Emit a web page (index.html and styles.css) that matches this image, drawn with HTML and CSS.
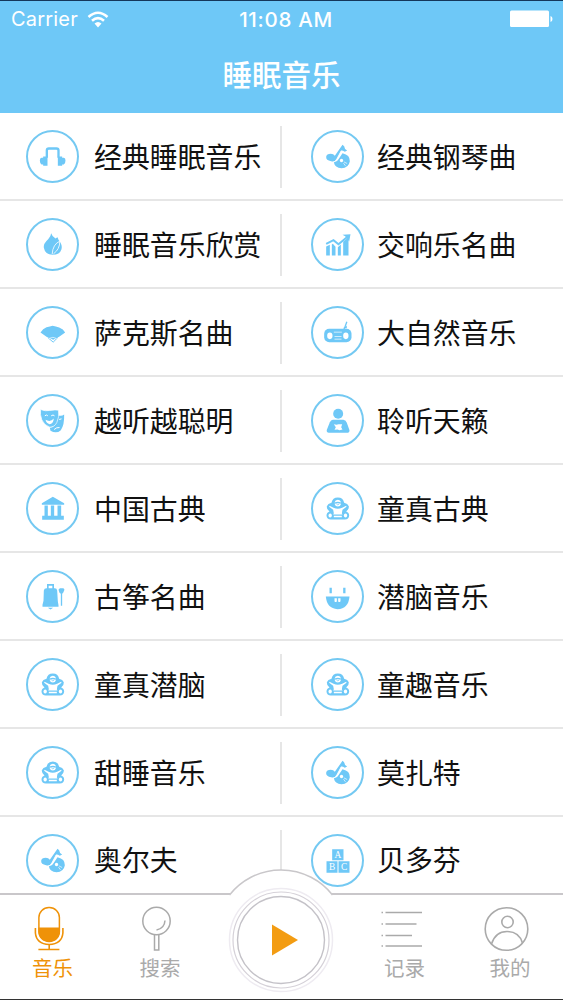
FILE: index.html
```
<!DOCTYPE html>
<html lang="zh-CN">
<head>
  <meta charset="UTF-8" />
  <meta name="viewport" content="width=device-width, initial-scale=1.0"/>
  <title>睡眠音乐</title>
  <link rel="stylesheet" href="styles.css">
</head>
<body>
  <!-- icon set, origin is the middle of the round badge -->
  <svg class="sprite" aria-hidden="true">
    <symbol id="headphones" viewBox="-73.5 -73.5 147 147">
      <path d="M-17 4V-18Q-17-24-11-24H12Q18-24 18-18V4" fill="none" stroke="currentColor" stroke-width="7"/>
      <path d="M-28 0H-15V28H-28V24H-33Q-38 20-38 12Q-38 5-33 4H-28ZM29 0H16V28H29V24H34Q39 20 39 12Q39 5 34 4H29Z"/>
    </symbol>
    <symbol id="drop" viewBox="-73.5 -73.5 147 147">
      <path d="M-4-34Q-1-24 9-18Q15-22 15-22Q17-15 22-9Q30 3 27 14Q22 31 0 31Q-22 31-26 10Q-28-3-13-16Q-5-24-4-34Z"/>
      <path d="M22-10Q1-1-1 29M22-10Q22 14 3 28" fill="none" stroke="#fff" stroke-width="2.500"/>
    </symbol>
    <symbol id="disc" viewBox="-73.5 -73.5 147 147">
      <path d="M15-35L20-31Q20-24 29-18L22-14Q15-19 11-18L-2 7Q-8 18-19 14Q-35 12-34 1Q-33-8-20-8Q-12-8-8-2Z"/>
      <path d="M15-10Q38-5 37 14Q34 34 12 35Q-8 34-11 17Q-2 17 4 7Z"/>
      <circle cx="12" cy="12" r="5" fill="#fff"/>
      <path d="M19 16L29 21M18 20L24 28M11-17L-2 7Q-6 16-14 18" fill="none" stroke="#fff" stroke-width="2"/>
    </symbol>
    <symbol id="chart" viewBox="-73.5 -73.5 147 147">
      <path d="M-34 33V6L-23 1V33ZM-17 33V0L-14-2L-6 7V33ZM1 33V8L10 0V33ZM17 33V-8L33-22V33Z"/>
      <path d="M-34-2L-12-13L3-1L30-23" fill="none" stroke="currentColor" stroke-width="6"/>
      <path d="M15-29L39-31L35-9L29-17L23-25Z"/>
    </symbol>
    <symbol id="fan" viewBox="-73.5 -73.5 147 147">
      <path d="M-36 0L-28-10L-18-16L-8-18L0-20L10-18L20-15L31-9L38 0L20 13L2 22L-18 13Z"/>
      <path d="M-14 15L2 29L16 15" fill="none" stroke="currentColor" stroke-width="3"/>
      <path d="M-11 18Q2 11 12 18" fill="none" stroke="#fff" stroke-width="2"/>
    </symbol>
    <symbol id="masks" viewBox="-73.5 -73.5 147 147">
      <path d="M16-16Q27-12 35-18Q36 13 25 29Q12 41-6 31L-8 22Q15 17 16-16Z"/>
      <path d="M5 27Q12 20 21 21" fill="none" stroke="#fff" stroke-width="3"/>
      <path d="M20-3L27-5" stroke="#fff" stroke-width="3"/>
      <path d="M-36-33Q-21-27-8-30Q8-33 18-31Q21-10 13 6Q6 20-8 20Q-25 15-32-2Q-38-18-36-33Z" stroke="#fff" stroke-width="2"/>
      <path d="M-21-2Q-6 6 4-6Q2 11-9 11Q-18 9-21-2Z" fill="#fff"/>
      <path d="M-23-14Q-18-19-14-14M-4-14Q2-19 6-14" fill="none" stroke="#fff" stroke-width="3"/>
    </symbol>
    <symbol id="radio" viewBox="-73.5 -73.5 147 147">
      <rect x="-40" y="-11" width="82" height="40" rx="15"/>
      <path d="M20-10L28-32" stroke="currentColor" stroke-width="4"/>
      <path d="M16-13L28-20V-13Z"/>
      <ellipse cx="-23" cy="10" rx="8" ry="10" fill="#fff"/>
      <ellipse cx="25" cy="10" rx="8" ry="10" fill="#fff"/>
      <path d="M-11-1H13M-9 12H12M-9 20H12" stroke="#fff" stroke-width="2"/>
    </symbol>
    <symbol id="reader" viewBox="-73.5 -73.5 147 147">
      <circle cx="2" cy="-20" r="15"/>
      <path d="M-14-2H18Q25 0 28 7L36 29Q36 37 28 37H-26Q-34 36-32 28L-23 5Q-20-1-14-2Z"/>
      <path d="M-11 11L-3 13L3 11L14 11L11 20L15 27L6 29L0 27L-9 28L-5 20Z" fill="#fff"/>
    </symbol>
    <symbol id="temple" viewBox="-73.5 -73.5 147 147">
      <path d="M1-35L35-16V-11H-32V-16ZM-24-9H-14V23H-24ZM-5-9H5V23H-5ZM15-9H26V23H15ZM-31 22H34V34H-31Z"/>
    </symbol>
    <symbol id="bear" viewBox="-73.5 -73.5 147 147">
      <path d="M1-33Q17-33 20-17Q31-14 34-7Q35 2 26 9Q35 12 35 22Q34 33 22 33H-20Q-32 33-33 22Q-33 12-24 9Q-33 2-32-7Q-29-14-18-17Q-15-33 1-33Z"/>
      <g fill="#fff">
        <path d="M-9-18Q-7-26 1-26Q9-26 11-18Q1-22-9-18Z"/>
        <path d="M-9-14Q1-18 11-14Q9-6 1-6Q-7-6-9-14Z"/>
        <path d="M-24-8L-12-2Q1 4 14-2L26-8L27-5L15 4L13 14L15 18H-13L-11 14L-13 4L-25-5Z"/>
        <path d="M-11 22H13V26H-11Z"/>
        <ellipse cx="-22" cy="21" rx="5" ry="6"/>
        <ellipse cx="24" cy="21" rx="5" ry="6"/>
      </g>
      <path d="M-3-13Q1-9 5-13" fill="none" stroke="currentColor" stroke-width="2"/>
    </symbol>
    <symbol id="zither" viewBox="-73.5 -73.5 147 147">
      <path d="M-14-20V-35H2V-20" fill="none" stroke="currentColor" stroke-width="5"/>
      <path d="M-18-25H7Q13-25 14-18L16 14L18 26V31H-30V25L-27 13L-26-18Q-25-25-18-25ZM-14 34H2L-6 39Z"/>
      <path d="M18-20L22-25H33L36-20L32-11L29-8V28H25V-8L21-11Z"/>
    </symbol>
    <symbol id="smile" viewBox="-73.5 -73.5 147 147">
      <path d="M-35 0H36Q33 37 0 38Q-32 36-35 0Z"/>
      <path d="M-24-26H-17V-10H-24ZM17-26H24V-10H17Z"/>
      <path d="M-9 5H-2V15Q-7 19-9 14ZM2 5H9V14Q6 19 2 15Z" fill="#fff"/>
    </symbol>
    <symbol id="blocks" viewBox="-73.5 -73.5 147 147">
      <path d="M-16-34H18V-1H-16ZM-33 2H0V37H-33ZM3 2H36V37H3Z"/>
      <g class="block-letters">
        <text x="1" y="-8">A</text>
        <text x="-16" y="29">B</text>
        <text x="20" y="29">C</text>
      </g>
    </symbol>
  </svg>

  <div class="app">
    <header class="header">
      <div class="status-bar">
        <div class="carrier">
          <span>Carrier</span>
          <svg class="wifi" viewBox="0 0 22 17">
            <path d="M1.500 6Q11-2.500 20.500 6M5 9.800Q11 4.500 17 9.800" fill="none" stroke="#fff" stroke-width="2.600"/>
            <path d="M7.500 12.500Q11 9.500 14.500 12.500L11 16.500Z" fill="#fff"/>
          </svg>
        </div>
        <div class="time">11:08 AM</div>
        <svg class="battery" viewBox="0 0 43 18">
          <rect x="0" y="0.500" width="39" height="16.500" rx="1.500" fill="#fff"/>
          <path d="M40.500 6Q42.500 6.500 42.500 9Q42.500 11.500 40.500 12Z" fill="#fff"/>
        </svg>
      </div>
      <h1 class="title">睡眠音乐</h1>
    </header>

    <main class="list">
      <div class="cell"><svg class="badge"><use href="#headphones"/></svg><span>经典睡眠音乐</span></div>
      <div class="cell"><svg class="badge"><use href="#disc"/></svg><span>经典钢琴曲</span></div>
      <div class="cell"><svg class="badge"><use href="#drop"/></svg><span>睡眠音乐欣赏</span></div>
      <div class="cell"><svg class="badge"><use href="#chart"/></svg><span>交响乐名曲</span></div>
      <div class="cell"><svg class="badge"><use href="#fan"/></svg><span>萨克斯名曲</span></div>
      <div class="cell"><svg class="badge"><use href="#radio"/></svg><span>大自然音乐</span></div>
      <div class="cell"><svg class="badge"><use href="#masks"/></svg><span>越听越聪明</span></div>
      <div class="cell"><svg class="badge"><use href="#reader"/></svg><span>聆听天籁</span></div>
      <div class="cell"><svg class="badge"><use href="#temple"/></svg><span>中国古典</span></div>
      <div class="cell"><svg class="badge"><use href="#bear"/></svg><span>童真古典</span></div>
      <div class="cell"><svg class="badge"><use href="#zither"/></svg><span>古筝名曲</span></div>
      <div class="cell"><svg class="badge"><use href="#smile"/></svg><span>潜脑音乐</span></div>
      <div class="cell"><svg class="badge"><use href="#bear"/></svg><span>童真潜脑</span></div>
      <div class="cell"><svg class="badge"><use href="#bear"/></svg><span>童趣音乐</span></div>
      <div class="cell"><svg class="badge"><use href="#bear"/></svg><span>甜睡音乐</span></div>
      <div class="cell"><svg class="badge"><use href="#disc"/></svg><span>莫扎特</span></div>
      <div class="cell"><svg class="badge"><use href="#disc"/></svg><span>奥尔夫</span></div>
      <div class="cell"><svg class="badge"><use href="#blocks"/></svg><span>贝多芬</span></div>
    </main>

    <nav class="tab-bar">
      <a class="tab active">
        <svg class="tab-icon" viewBox="3.600 0 46 46">
          <rect x="12.500" y="1.500" width="20.500" height="34" rx="10" fill="none" stroke="currentColor" stroke-width="1.500"/>
          <path d="M12 21.500H33.500V26Q32.500 35.500 22.800 35.500Q13 35.500 12 26Z" fill="currentColor"/>
          <path d="M9 22V27Q10 38 22.800 38.500Q35.500 38 36.500 27V22M22.800 38V43M12 43.500H33" fill="none" stroke="currentColor" stroke-width="1.600"/>
        </svg>
        <span>音乐</span>
      </a>
      <a class="tab">
        <svg class="tab-icon" viewBox="0 0 46 46">
          <circle cx="19.500" cy="15" r="13.700" fill="none" stroke="currentColor" stroke-width="1.500"/>
          <path d="M28 14.500Q27.500 22.500 19.500 24M17.500 29V44H21.800V29" fill="none" stroke="currentColor" stroke-width="1.500"/>
        </svg>
        <span>搜索</span>
      </a>
      <a class="play">
        <svg class="play-icon" viewBox="0 0 110 131">
          <path d="M3.500 26A65.500 65.500 0 0 1 106.500 26V131H3.500Z" fill="#fff"/>
          <path d="M3.500 26A65.500 65.500 0 0 1 106.500 26" fill="none" stroke="#c9c7ca" stroke-width="1.500"/>
          <g fill="none">
            <circle cx="55" cy="71" r="51.500" stroke="#eeebf1" stroke-width="1.500"/>
            <circle cx="55" cy="71" r="48" stroke="#d5d1d8" stroke-width="1.200"/>
            <circle cx="55" cy="71" r="43.500" stroke="#c4c2c8" stroke-width="1.400"/>
          </g>
          <path d="M46 55.500L72 71L46 86.500Z" fill="#f39c12"/>
        </svg>
      </a>
      <a class="tab">
        <svg class="tab-icon" viewBox="1.500 0 46 46">
          <path d="M5 6.500H41.500M5 18H36M5 29.500H31.500M5 40H41.500" stroke="currentColor" stroke-width="1.600"/>
          <path d="M1 6.500H2.500M1 18H2.500M1 29.500H2.500M1 40H2.500" stroke="currentColor" stroke-width="1.600"/>
        </svg>
        <span>记录</span>
      </a>
      <a class="tab">
        <svg class="tab-icon" viewBox="0 0 46 46">
          <g fill="none" stroke="currentColor" stroke-width="1.600">
            <circle cx="19.500" cy="23" r="21.300"/>
            <circle cx="20.500" cy="16" r="5.700"/>
            <path d="M4.500 38Q8.500 25.500 20 25.500Q32 25.500 35.500 37"/>
          </g>
        </svg>
        <span>我的</span>
      </a>
    </nav>
  </div>
</body>
</html>
```
FILE: styles.css
```
body {
  margin: 0;
  font-family: "Noto Sans CJK SC", sans-serif;
  background-color: #fff;
}
.sprite {
  display: none;
}
.app {
  display: flex;
  flex-direction: column;
  height: 1000px;
  overflow: hidden;
  box-sizing: border-box;
  border-top: 1px solid #14375a;
  border-bottom: 1px solid #333;
}
.header {
  flex: none;
  height: 112px;
  background-color: #6ec8f7;
  color: #fff;
}
.status-bar {
  display: grid;
  grid-template-columns: 1fr auto 1fr;
  align-items: center;
  height: 36px;
  padding: 0 10px 0 11px;
  font-family: Inter, sans-serif;
  font-size: 20px;
}
.carrier {
  display: flex;
  align-items: center;
  gap: 9px;
  letter-spacing: 0.2px;
}
.wifi {
  width: 22px;
  height: 17px;
}
.time {
  padding-left: 8px;
  font-size: 20.500px;
  font-weight: 500;
  letter-spacing: 0.700px;
}
.battery {
  justify-self: end;
  width: 43px;
  height: 18px;
}
.title {
  margin: 14px 0 0;
  font-size: 29.500px;
  line-height: 44px;
  font-weight: 500;
  text-align: center;
}
.list {
  flex: 1;
  min-height: 0;
  overflow: hidden;
  display: grid;
  grid-template-columns: 282px 281px;
  grid-auto-rows: 87.950px;
}
.cell {
  display: flex;
  align-items: center;
  gap: 15px;
  padding-left: 26px;
  box-sizing: border-box;
  border-bottom: 2px solid #e6e6e6;
  font-size: 27.900px;
  line-height: 40px;
  color: #111;
}
.cell:nth-child(odd)::after {
  content: "";
  width: 2px;
  height: 62px;
  margin: 3px 0 0 auto;
  background-color: #e6e6e6;
}
.cell:nth-child(even) {
  padding-left: 29px;
  gap: 13px;
}
.badge {
  flex: none;
  width: 53px;
  height: 53px;
  margin-top: 2px;
  box-sizing: border-box;
  border: 2px solid #74c9f2;
  border-radius: 50%;
  fill: #6ec8f7;
  color: #6ec8f7;
}
.block-letters {
  fill: #fff;
  font-family: "Liberation Serif", serif;
  font-size: 28px;
  text-anchor: middle;
}
.tab-bar {
  position: relative;
  flex: none;
  display: grid;
  grid-template-columns: 105px 110px 137px 105px 106px;
  height: 106px;
  box-sizing: border-box;
  border-top: 2px solid #c9c7ca;
  background-color: #fff;
}
.tab {
  display: flex;
  flex-direction: column;
  align-items: center;
  padding-top: 11px;
  font-size: 20.500px;
  line-height: 30px;
  color: #aaa;
}
.tab:nth-child(4),
.tab:nth-child(5) {
  grid-row: 1;
}
.tab:nth-child(4) {
  grid-column: 4;
}
.tab:nth-child(5) {
  grid-column: 5;
}
.tab.active {
  color: #ef9208;
}
.tab-icon {
  width: 46px;
  height: 46px;
  overflow: visible;
}
/* raised button on top of the bar */
.play {
  position: absolute;
  left: 226px;
  top: -26px;
}
.play-icon {
  display: block;
  width: 110px;
  height: 131px;
}
```
